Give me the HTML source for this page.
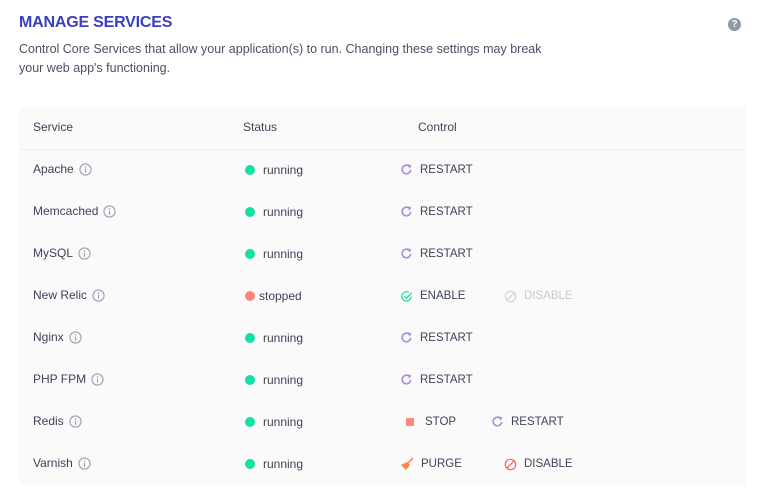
<!DOCTYPE html>
<html><head><meta charset="utf-8"><style>
*{margin:0;padding:0;box-sizing:border-box}
body{width:765px;height:500px;background:#fff;font-family:"Liberation Sans",sans-serif;color:#3d4458;position:relative;overflow:hidden}
.a{position:absolute;white-space:nowrap}
h1{position:absolute;left:19px;top:14px;font-size:16px;font-weight:bold;color:#3b3fbf;letter-spacing:-0.2px}
.desc{left:19px;top:40px;font-size:12.5px;line-height:19px;color:#4a5065}
.tbl{position:absolute;left:19px;top:107px;width:727px;height:378px;background:#fafafb}
.hl{position:absolute;left:19px;top:149px;width:727px;height:1px;background:#efeff2}
.t{font-size:12px;line-height:14px}
.dot{position:absolute;width:10px;height:10px;border-radius:50%}
.up{text-transform:uppercase;letter-spacing:0}
.svc svg{vertical-align:-3px;margin-left:5px}
</style></head><body>
<h1>MANAGE SERVICES</h1>
<div class="a desc">Control Core Services that allow your application(s) to run. Changing these settings may break<br>your web app's functioning.</div>
<div class="a" style="left:728px;top:18px;width:13px;height:13px;border-radius:50%;background:#8f97ab;color:#fff;font-size:10px;font-weight:bold;text-align:center;line-height:13px">?</div>
<div class="tbl"></div><div class="hl"></div>
<div class="a t" style="left:33px;top:120px">Service</div>
<div class="a t" style="left:243px;top:120px">Status</div>
<div class="a t" style="left:418px;top:120px">Control</div>
<svg width="0" height="0" style="position:absolute"><defs>
<symbol id="info" viewBox="0 0 14 14"><circle cx="7" cy="7" r="6" fill="none" stroke="#9aa0b2" stroke-width="1.2"/><rect x="6.4" y="6" width="1.2" height="4.5" fill="#9aa0b2"/><circle cx="7" cy="4.2" r="0.8" fill="#9aa0b2"/></symbol>
<symbol id="rs" viewBox="0 0 14 14"><path d="M11.5 7.5A4.6 4.6 0 1 1 9.5 3.2" fill="none" stroke="#a98bdb" stroke-width="1.7"/><path d="M8 1.2L12.3 2.6 10.2 6.2Z" fill="#a98bdb"/></symbol>
<symbol id="no" viewBox="0 0 14 14"><circle cx="7" cy="7" r="5.6" fill="none" stroke="currentColor" stroke-width="1.3"/><path d="M3 11L11 3" stroke="currentColor" stroke-width="1.3"/></symbol>
</defs></svg>
<div id="rows"></div>
<script>
var R=[["Apache",1,[["rs","RESTART",400]]],["Memcached",1,[["rs","RESTART",400]]],["MySQL",1,[["rs","RESTART",400]]],["New Relic",0,[["ok","ENABLE",400],["dis","DISABLE",504]]],["Nginx",1,[["rs","RESTART",400]]],["PHP FPM",1,[["rs","RESTART",400]]],["Redis",1,[["stop","STOP",406],["rs","RESTART",491]]],["Varnish",1,[["purge","PURGE",400],["no","DISABLE",504]]]];
var h="";
R.forEach(function(r,i){var c=170+42*i;
h+='<div class="a t svc" style="left:33px;top:'+(c-8)+'px">'+r[0]+'<svg width="13" height="13"><use href="#info"/></svg></div>';
h+='<div class="dot" style="left:245px;top:'+(c-5)+'px;background:'+(r[1]?'#12e0a5':'#fa8479')+'"></div>';
h+='<div class="a t" style="left:'+(r[1]?263:259)+'px;top:'+(c-7)+'px">'+(r[1]?'running':'stopped')+'</div>';
r[2].forEach(function(b){var x=b[2],ic="",col="#3d4458",tx=x+20;
if(b[0]=="rs")ic='<svg class="a" style="left:'+x+'px;top:'+(c-7)+'px" width="13" height="13"><use href="#rs"/></svg>';
if(b[0]=="ok")ic='<svg class="a" style="left:'+x+'px;top:'+(c-6)+'px" width="13" height="13" viewBox="0 0 14 14"><path d="M12 7A5 5 0 1 1 9.5 2.6" fill="none" stroke="#35d9a0" stroke-width="1.4"/><path d="M4.5 6.5L7 9 12.5 3" fill="none" stroke="#35d9a0" stroke-width="1.4"/></svg>';
if(b[0]=="dis"){ic='<svg class="a" style="left:'+x+'px;top:'+(c-6)+'px;color:#cfd1d8" width="13" height="13"><use href="#no"/></svg>';col="#c7c9d1";}
if(b[0]=="no")ic='<svg class="a" style="left:'+x+'px;top:'+(c-6)+'px;color:#e9675c" width="13" height="13"><use href="#no"/></svg>';
if(b[0]=="stop")ic='<div class="a" style="left:'+x+'px;top:'+(c-4)+'px;width:8px;height:8px;background:#fb8a7e"></div>';
if(b[0]=="purge")ic='<svg class="a" style="left:'+x+'px;top:'+(c-7)+'px" width="14" height="14" viewBox="0 0 14 14"><path d="M13 1L8 6" stroke="#f9884f" stroke-width="1.6"/><path d="M7 5L10 8 6 13 1 8Z" fill="#f9884f"/></svg>';
if(b[0]=="stop")tx=x+19;if(b[0]=="purge")tx=x+21;
h+=ic+'<div class="a t up" style="left:'+tx+'px;top:'+(c-7)+'px;color:'+col+';font-size:11.5px">'+b[1]+'</div>';});
});
document.getElementById("rows").innerHTML=h;
</script>
</body></html>
